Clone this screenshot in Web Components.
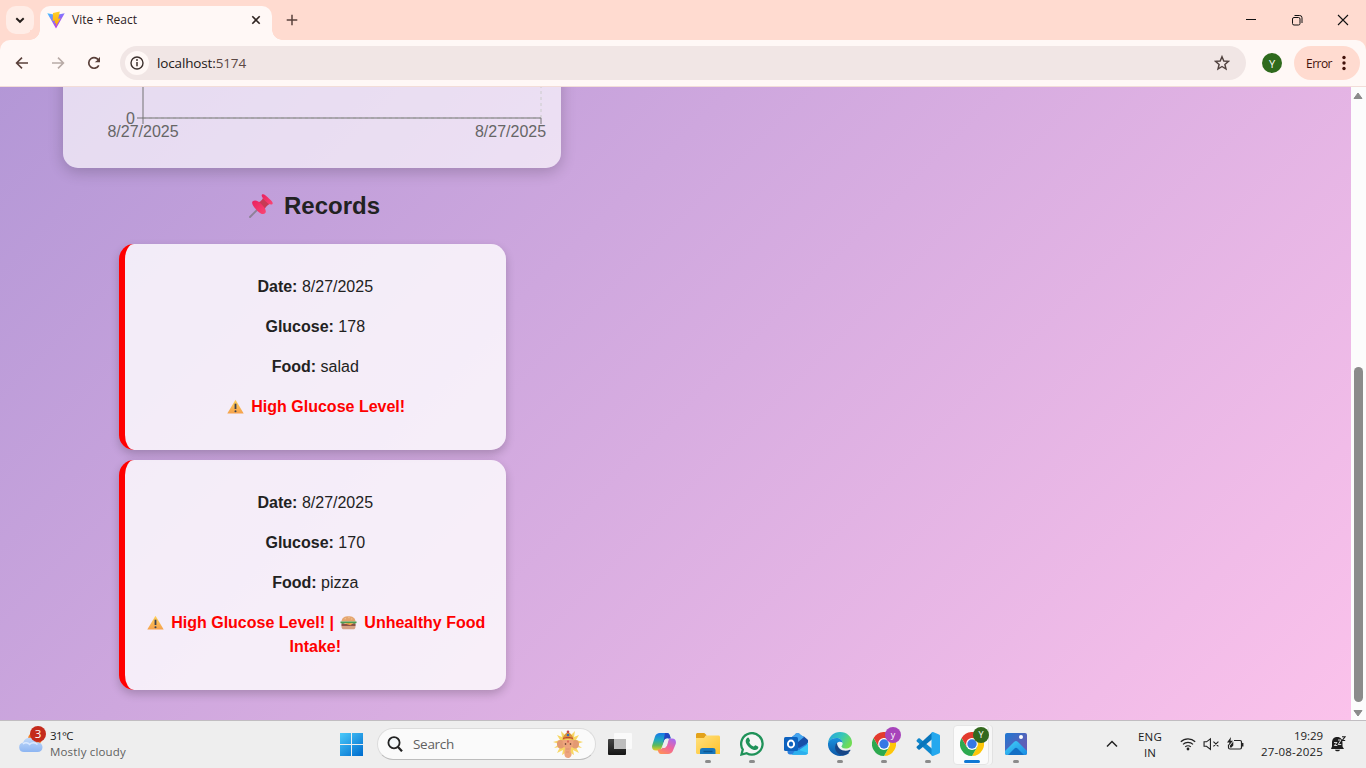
<!DOCTYPE html>
<html lang="en"><head><meta charset="utf-8"><title>Vite + React</title>
<style>
html,body{margin:0;height:100%;overflow:hidden}
body{font-family:"Open Sans","Noto Sans",sans-serif}
</style></head><body>
<desktop-screen></desktop-screen>
<script>
const make=(name,html,setup)=>customElements.define(name,class extends HTMLElement{
  connectedCallback(){
    if(this.shadowRoot)return;
    const t=document.createElement('template');
    t.innerHTML=typeof html==='function'?html(this):html;
    this.attachShadow({mode:'open'}).append(t.content.cloneNode(true));
    if(setup)setup(this);
  }
});

const chromeSvg=`<circle cx="12" cy="12" r="12" fill="#fff"/><path d="M12 6H22.4A12 12 0 0 1 12 24L17.2 15z" fill="#fdc60a"/><path d="M1.6 6A12 12 0 0 0 12 24L17.2 15H6.8z" fill="#2da94f"/><path d="M12 6H22.4A12 12 0 0 0 1.6 6L6.8 15 7 9z" fill="#e33b2e"/><circle cx="12" cy="12" r="5.9" fill="#fff"/><circle cx="12" cy="12" r="4.7" fill="#3578e5"/>`;
const ICONS={
 chevdown:['0 0 10 10','<path d="M1.3 3.2 5 6.8 8.7 3.2" fill="none" stroke="#251e1b" stroke-width="1.9"/>'],
 vite:['0 0 18 18','<defs><linearGradient id="v" x1="0" y1="0" x2=".7" y2="1"><stop stop-color="#41c5ff"/><stop offset=".5" stop-color="#8b6cfb"/><stop offset="1" stop-color="#c02ee8"/></linearGradient><linearGradient id="b" x1="0" y1="0" x2="0" y2="1"><stop stop-color="#ffd02a"/><stop offset="1" stop-color="#ffa800"/></linearGradient></defs><path d="M.3 2.300 9 17.500 17.700 2.300 9 4z" fill="url(#v)"/><path d="M12.800.600 6 2.100l-.3 8 2.400-.5-.6 3 1.700-.5-.4 3.400L13.700 7.200l-2.500.5.6-2.400z" fill="url(#b)"/>'],
 close:['0 0 10 10','<path d="M1.3 1.3l7.4 7.4M8.7 1.3 1.3 8.7" stroke="#302522" stroke-width="1.6"/>'],
 plus:['0 0 12 12','<path d="M6 .7v10.6M.7 6h10.6" stroke="#59413b" stroke-width="1.5"/>'],
 min:['0 0 12 12','<path d="M1 5.5h10" stroke="#111"/>'],
 restore:['0 0 12 12','<rect x="1.5" y="3.5" width="7.5" height="7.5" rx="1.5" fill="none" stroke="#111"/><path d="M3.5 1.5h5.2a2.3 2.3 0 0 1 2.3 2.3V9" fill="none" stroke="#111"/>'],
 wclose:['0 0 12 12','<path d="M1 1l10 10M11 1 1 11" stroke="#111" stroke-width="1.1"/>'],
 back:['0 0 14 14','<path d="M13 7H1.8M7 1.6 1.6 7 7 12.4" fill="none" stroke="#5a403a" stroke-width="1.6"/>'],
 fwd:['0 0 14 14','<path d="M1 7h11.2M7 1.6 12.4 7 7 12.4" fill="none" stroke="#b8aaa6" stroke-width="1.6"/>'],
 reload:['0 0 14 14','<path d="M11.8 9.3A5.3 5.3 0 1 1 12 5" fill="none" stroke="#5a403a" stroke-width="1.7"/><path d="M13 .8v5.5H7.7L10 4.6z" fill="#5a403a"/>'],
 info:['0 0 14 14','<circle cx="7" cy="7" r="6" fill="none" stroke="#3c302d" stroke-width="1.4"/><path d="M7 6v4.2" stroke="#3c302d" stroke-width="1.5"/><circle cx="7" cy="4" r=".95" fill="#3c302d"/>'],
 star:['0 0 16 16','<path d="M8 1.7 9.8 6l4.7.4-3.6 3 1.1 4.6-4-2.5L4 14l1.1-4.6-3.6-3L6.200 6z" fill="none" stroke="#50413e" stroke-width="1.45"/>'],
 dots:['0 0 4 16','<g fill="#42110a"><circle cx="2" cy="2.500" r="1.700"/><circle cx="2" cy="8" r="1.700"/><circle cx="2" cy="13.500" r="1.700"/></g>'],
 pin:['0 0 24 24','<defs><linearGradient id="p" x1="0" y1="0" x2="1" y2="1"><stop stop-color="#e9205f"/><stop offset="1" stop-color="#fb4674"/></linearGradient></defs><path d="M1 23 9 15" stroke="#8d8198" stroke-width="1.900" stroke-linecap="round"/><path d="m14 4 6.500 6c-2.500 1.500-4.500 3.500-5.500 6.500L7.500 9C10.500 8.500 13 6.500 14 4z" fill="#c83a55"/><path d="M13 .600c1.500-1.300 3.700.7 5.700 2.700 2 2 6 5 4.800 6.700-1.300 1.600-4.500-.4-6.300-2.200C15.200 5.800 11.600 2.200 13 .6z" fill="url(#p)"/><path d="M3.700 7.300c2.800-2 6 .2 8.300 2.500 2.500 2.600 6.200 6.200 4.300 9.200-1.700 2.300-5.300.5-7.600-1.800C6.200 14.600 1.400 9.700 3.700 7.300z" fill="url(#p)"/>'],
 warn:['0 0 18 16','<defs><linearGradient id="w" x1="0" y1="0" x2="0" y2="1"><stop stop-color="#ffd25a"/><stop offset="1" stop-color="#f5a14c"/></linearGradient></defs><path d="M9 .8 17.700 15.500H.3z" fill="url(#w)"/><path d="M9 5v5.700" stroke="#3a4050" stroke-width="1.900"/><circle cx="9" cy="13" r="1.100" fill="#3a4050"/>'],
 burger:['0 0 18 16','<path d="M1.500 7C2 2.500 5 1.200 9 1.200S16 2.500 16.500 7z" fill="#e5a56f"/><path d="M5 4h1M9 2.900h1M12 4.200h1" stroke="#f9ddb0"/><path d="M.5 6.800h17v1.700l-2.500 1-3-1-3 1-3-1-3 1-2.500-1z" fill="#4d9c4e"/><path d="M1.500 9.300h15v2.400H1.500z" fill="#8d4e45"/><path d="M4 8.700h10l-3 2.300z" fill="#f2a73f"/><path d="M1.500 11.600h15c0 2.700-1 3.700-3 3.700h-9c-2 0-3-1-3-3.700z" fill="#d6a083"/>'],
 weather:['0 0 26 24','<defs><linearGradient id="c" x1="0" y1="0" x2="0" y2="1"><stop stop-color="#c2d9f8"/><stop offset="1" stop-color="#8db5f2"/></linearGradient></defs><circle cx="17" cy="8" r="7" fill="#f47d20"/><path d="M6 22a5 5 0 0 1-.8-9.900C6 8.800 8.500 7 11.700 7c3.300 0 5.800 2 6.500 5 3.500-.8 6.300 1.800 6.300 5 0 3-2 5-5 5z" fill="url(#c)"/><path d="M5 13.500c2-2 5-1.500 6.500.5 2.500-2.500 6-2 8 0" fill="none" stroke="#d9e8ff" stroke-width="1.500"/>'],
 start:['0 0 24 24','<defs><linearGradient id="s" gradientUnits="userSpaceOnUse" x1="0" y1="0" x2="20" y2="24"><stop stop-color="#4cccfb"/><stop offset="1" stop-color="#0270d0"/></linearGradient></defs><path d="M0 1H11V12H0zM12 1H23V12H12zM0 13H11V24H0zM12 13H23V24H12z" fill="url(#s)"/>'],
 search:['0 0 16 16','<circle cx="7" cy="6.700" r="5.600" fill="#f2f6f8" stroke="#222" stroke-width="1.800"/><path d="m11 11 4 4.300" stroke="#222" stroke-width="2.200"/>'],
 ganesha:['0 0 30 28','<path d="m15 1 2 5 5-5-1 6 5-2-3 5 7 2-6 2 5 4-6-1 3 6-6-3 1 5-5-3-1 4-1-4-5 3 1-5-6 3 3-6-6 1 5-4-6-2 7-2-3-5 5 2-1-6 5 5z" fill="#f8d765"/><path d="M10 10.500C6 9 3.500 11 4 14.500 4.500 18.500 7.500 20 11 17zM20 10.500c4-1.500 6.500.5 6 4-.5 4-3.500 5.500-7 2.500z" fill="#e39a72"/><path d="M10 10h10c1 3 0 6-2 8-.7 3-.5 4 .5 5.500C19 26 17 28 15 28c-3 0-4-3-3.500-6l.5-4c-2-2-3-5-2-8z" fill="#eda47d"/><path d="M9.500 10c0-3.500 2-5.500 5.500-8.500 3.500 3 5.500 5 5.500 8.500-4-1.500-7-1.500-11 0z" fill="#d9953c"/><path d="M10 8.500c3-1.500 7-1.500 10 0" fill="none" stroke="#c14230"/><circle cx="15" cy="1.800" r="1.300" fill="#c84444"/><circle cx="15" cy="5" r="1.300" fill="#366bb3"/><path d="M15 10.500v2" stroke="#c33" stroke-width="1"/><circle cx="12.500" cy="14" r=".8" fill="#4a2a22"/><circle cx="17.500" cy="14" r=".8" fill="#4a2a22"/><path d="M13 19h3.500M13 22h3" stroke="#d58a69" stroke-width=".6"/>'],
 taskview:['0 0 24 24','<defs><linearGradient id="t" x1="0" y1="0" x2="0" y2="1"><stop stop-color="#454545"/><stop offset="1" stop-color="#151515"/></linearGradient></defs><rect y="7" width="18" height="16" rx="1" fill="url(#t)"/><rect x="6" y="1" width="18" height="16" rx="1" fill="#fff" fill-opacity=".72"/><path d="M6 7h12v10H6z" fill="#bdbdbd"/>'],
 copilot:['0 0 24 24','<defs><linearGradient id="a" x1="0" y1="0" x2="0" y2="1"><stop stop-color="#1677e8"/><stop offset=".4" stop-color="#20a9c0"/><stop offset=".7" stop-color="#5cb95c"/><stop offset="1" stop-color="#e8cd22"/></linearGradient><linearGradient id="d" x1=".8" y1="0" x2=".2" y2="1"><stop stop-color="#a66bf0"/><stop offset=".5" stop-color="#f0649c"/><stop offset="1" stop-color="#ff9157"/></linearGradient></defs><path d="M8 1h7c2 0 2.500 1.500 3 3l.7 2.500H15c-1.500 0-2.300 1-2.800 2.500L9.500 16c-.5 2-1.500 2.500-3 2.500H4C.5 18.500-.5 16 .3 13L3 4.500C3.700 2.300 5.500 1 8 1z" fill="url(#a)"/><path d="M13 1h2c2 0 2.500 1.500 3 3l.7 2.500H15c-1.500 0-2.300 1-2.800 2.500L11 12z" fill="#2346c2"/><path d="M16 22H9c-2 0-2.500-1.500-3-3l-.5-1.500H8c1.500 0 2.300-1 2.800-2.500L11 14h3c1 0 1-.5 1.300-1.500L17 6.500h3c3.500 0 4.500 2.500 3.700 5.500L21 18.500c-.7 2.200-2.500 3.500-5 3.500z" fill="url(#d)"/><path d="m11.900 9.500-1.700 6.500h2c1.300 0 2.200-1 2.500-2.500l1.800-6.800c-2.800-.5-4 .5-4.600 2.800z" fill="#eee"/>'],
 folder:['0 0 24 24','<defs><linearGradient id="f" x1="0" y1="0" x2="1" y2="1"><stop stop-color="#ffe17e"/><stop offset="1" stop-color="#ffc22c"/></linearGradient></defs><path d="M1.500 1h6.800L11 3.500h-1L8 7H0V2.500C0 1.700.7 1 1.500 1z" fill="#e3a21a"/><path d="M0 6h8l2-2.500h12.500c.9 0 1.500.6 1.500 1.500v17H1.500C.7 22 0 21.300 0 20.500z" fill="url(#f)"/><path d="M4 22v-3.500C4 16.800 5 16 6.500 16h10.500c1.700 0 2.500.8 2.500 2.500V22z" fill="#1877bd"/><path d="M7.500 19.500h9" stroke="#0b5593" stroke-width="1.500"/>'],
 whatsapp:['0 0 24 24','<path d="M1.500 22.500 2.800 17.500A10.700 10.700 0 1 1 6.700 21.200z" fill="#f5f5f5" stroke="#1f9259" stroke-width="2.300"/><path d="M6.800 6.200c.9-.9 1.900-.8 2.200.1l1 2.200c.3.700-.9 1.300-.7 1.900.8 1.900 2.300 3.200 4.200 4 .7.200 1.300-1.500 2-1.200l2.400 1.200c.8.400.5 2-.5 2.800-1.800 1.400-4.600.8-7.300-1.300-3.300-2.600-6-6.800-3.300-9.700z" fill="#1f9259"/>'],
 outlook:['0 0 24 24','<path d="m3.500 8.500 9-7.200c.8-.5 1.200-.5 2 0L23 8v12c0 1.500-1 2.500-2.500 2.500H6c-1.500 0-2.500-1-2.500-2.500z" fill="#2a7edc"/><path d="m7 5.500 13-1L24 8v3l-9 5-8-4z" fill="#164fa7"/><path d="M24 10v10c0 1.800-1 2.700-2.700 2.700H8L22.500 13z" fill="#36c7f5"/><path d="m12 17 12 4c-.5 1.200-1.200 1.700-2.700 1.700H8z" fill="#2caeed"/><path d="M13 1.200c.5-.3 1-.3 1.500 0L20 5l-6 5-7-4.200z" fill="#43a4ee"/><rect y="5" width="14" height="14" rx="1.500" fill="#0d62bf"/><ellipse cx="7" cy="12" rx="3.100" ry="3.500" fill="none" stroke="#fff" stroke-width="1.900"/>'],
 edge:['0 0 24 24','<defs><linearGradient id="e" x1="0" y1="0" x2="1" y2=".5"><stop stop-color="#249ee4"/><stop offset=".55" stop-color="#36c7b9"/><stop offset="1" stop-color="#70dc54"/></linearGradient><linearGradient id="g" x1="0" y1="0" x2="0" y2="1"><stop stop-color="#1a91de"/><stop offset="1" stop-color="#0d58a7"/></linearGradient></defs><path d="M0 11C.7 4.500 5.700 0 12 0c7 0 12 5 12 10.500 0 4-2.700 6-6.500 6-3 0-4.300-1-4.300-2s1.300-1.500 1.300-3.500c0-3-2.700-5-6-5C4.500 6 1.500 8 0 11z" fill="url(#e)"/><path d="M0 11C1.500 7.800 4.500 6 8.500 6c3.500 0 6 2 6 5-1-1-2.300-1.500-4-1-3.500 1.500-3.500 6-.7 9 2.500 2.600 6.500 3.300 10 1.500l1.500.500C19 23 15.500 24 12 24 5 24-.7 18 0 11z" fill="url(#g)"/><path d="M9 10.500c-4 4-1.700 12 6 13 3-.5 6-2.300 7.500-5.200.2-.5-.3-.8-.7-.5-6 3-13-1.300-12.800-7.300z" fill="#164687"/><path d="M13.500 10.300c1.300 1 1.200 2.700.1 3.500-.8.700-.3 2 2.500 2.500h-3c-3.500-1-3.500-5.700.4-6z" fill="#e9f7fc"/>'],
 chrome:['0 0 24 24',chromeSvg],
 vscode:['0 0 24 24','<path d="M17 17.500 3.800 6.600c-.5-.4-1-.4-1.500 0L.8 7.900c-.5.500-.5 1 0 1.500L16 23.500z" fill="#0f87cd"/><path d="M17 6.500 3.800 17.400c-.5.400-1 .4-1.500 0L.8 16.100c-.5-.5-.5-1 0-1.500L16 .5z" fill="#0875bb"/><path d="m17 0 6 2.500c.6.300 1 .8 1 1.500v16c0 .7-.4 1.200-1 1.500L17 24c-1 0-1.500-.5-1.500-1.500V1.500C15.500.5 16 0 17 0z" fill="#24a8ee"/>'],
 photos:['0 0 24 24','<defs><linearGradient id="h" x1="0" y1="0" x2="1" y2="1"><stop stop-color="#1d78d3"/><stop offset=".6" stop-color="#5961b8"/><stop offset="1" stop-color="#6b57b5"/></linearGradient><linearGradient id="m" x1="0" y1="0" x2="1" y2="1"><stop stop-color="#44d2f9"/><stop offset="1" stop-color="#188be2"/></linearGradient></defs><rect x="1" y="1" width="22" height="22" rx="2" fill="url(#h)"/><path d="M1 19 10 10c1.500-1.500 2.500-1.500 4 0L23 19v2c0 1.300-.7 2-2 2H3c-1.300 0-2-.7-2-2z" fill="url(#m)"/><path d="m4 23 6.500-6.500c1-1 2-1 3 0L20 23z" fill="#136fc5"/><circle cx="17" cy="5" r="2" fill="#fff"/>'],
 up:['0 0 12 12','<path d="m1 8.500 5-5 5 5" fill="none" stroke="#222" stroke-width="1.500"/>'],
 wifi:['0 0 16 14','<path d="M.8 4.800a10.300 10.300 0 0 1 14.400 0M3 7.400a7 7 0 0 1 10 0M5.200 9.900a4 4 0 0 1 5.600 0" fill="none" stroke="#222" stroke-width="1.200"/><circle cx="8" cy="12" r="1.400" fill="#222"/>'],
 mute:['0 0 16 14','<path d="M1 4.800h2.300L7 1.800v10.500L3.300 9.300H1zM9.800 4.700l4.700 4.700M14.500 4.700 9.800 9.400" fill="none" stroke="#222" stroke-width="1.050"/>'],
 battery:['0 0 17 14','<path d="M7 3.500h6A1.500 1.500 0 0 1 14.500 5v5.500A1.500 1.500 0 0 1 13 12H3a1.500 1.500 0 0 1-1.500-1.500V7.500" fill="none" stroke="#222" stroke-width="1.200"/><path d="M15.700 6v3.500" stroke="#222" stroke-width="1.500"/><path d="M4 0 0 5.500h2.500L1.500 9 6 3.800H3.500zM3 10.500V8.500l3.300-4v4L4.500 10.500z" fill="#222"/>'],
 bell:['0 0 16 16','<path d="M2 7c0-4 2-6 5-6 4 0 5.500 2.500 5.500 6v3.500L14 13H1l1-2.500z" fill="#1d1d1d"/><path d="M5 13.700h5c-.5 2.100-4.500 2.100-5 0z" fill="#1d1d1d"/><path d="M4 6.500h3L4.300 9.500h3M8 4h3L8.200 8.500h3" fill="none" stroke="#eee" stroke-width=".9"/><path d="M11.500 0h4v5h-3z" fill="#eee"/><path d="M12 .8h3L12.200 4.500h3" fill="none" stroke="#1d1d1d" stroke-width="1.100"/>']
};
make('ui-icon',el=>{
  const [box,body]=ICONS[el.getAttribute('name')];
  const w=el.getAttribute('w')||24,h=el.getAttribute('h')||w;
  return `<style>:host{display:inline-block;flex:none;width:${w}px;height:${h}px}svg{display:block;width:100%;height:100%}</style><svg viewBox="${box}" preserveAspectRatio="none">${body}</svg>`;
});

make('tab-strip',`<style>
:host{display:flex;height:40px;background:#ffdbd0;padding-left:6px;box-sizing:border-box;align-items:flex-start;flex:none}
.ts{width:28px;height:28px;border-radius:10px;background:#ffede7;display:grid;place-items:center;margin:6px 6px 0 0}
.tab{position:relative;width:232px;height:34px;margin-top:6px;background:#fff8f6;border-radius:10px 10px 0 0;display:flex;align-items:center;padding:0 11px 6px 7px;box-sizing:border-box;font-size:12px;line-height:16px;color:#2c211f}
.tab:before,.tab:after{content:"";position:absolute;bottom:0;width:10px;height:10px}
.tab:before{left:-10px;background:radial-gradient(circle at 0 0,#ffdbd0 9.500px,#fff8f6 10px)}
.tab:after{right:-10px;background:radial-gradient(circle at 100% 0,#ffdbd0 9.500px,#fff8f6 10px)}
fit-text{margin-left:7px}
.tab ui-icon:last-child{margin-left:auto}
.plus{margin:14px 0 0 14px}
.win{margin-left:auto;display:flex;gap:34px;padding:14px 17px 0 0}
</style><div class="ts"><ui-icon name="chevdown" w="10"></ui-icon></div>
<div class="tab"><ui-icon name="vite" w="18"></ui-icon><fit-text w="65">Vite + React</fit-text><ui-icon name="close" w="10"></ui-icon></div>
<ui-icon class="plus" name="plus" w="12"></ui-icon>
<div class="win"><ui-icon name="min" w="12"></ui-icon><ui-icon name="restore" w="12"></ui-icon><ui-icon name="wclose" w="12"></ui-icon></div>`);

make('address-bar',`<style>
:host{display:block;height:47px;background:#ffdbd0;flex:none}
.bar{height:47px;box-sizing:border-box;background:#fff8f6;border-radius:10px 10px 0 0;border-bottom:1px solid #f3ddd8;display:flex;align-items:center;padding:0 6px 0 15px}
.nav{display:flex;gap:22px;width:105px}
.omni{flex:1;height:34px;border-radius:17px;background:#f1e6e5;display:flex;align-items:center;padding:0 16px 0 5px;box-sizing:border-box;color:#231918;font-size:13.500px}
.i{width:24px;height:24px;border-radius:50%;background:#fff8f6;display:grid;place-items:center;margin-right:8px}
.omni>ui-icon{margin-left:auto}
.av{width:20px;height:20px;border-radius:50%;background:#2f6a1d;color:#fff;font-size:11px;display:grid;place-items:center;margin:0 12px 0 16px}
.err{width:66px;height:34px;border-radius:17px;background:#ffdbd0;display:flex;align-items:center;padding:0 14px 0 12px;box-sizing:border-box;font-size:12px;color:#42110a;justify-content:space-between}
</style><div class="bar"><div class="nav"><ui-icon name="back" w="14"></ui-icon><ui-icon name="fwd" w="14"></ui-icon><ui-icon name="reload" w="14"></ui-icon></div>
<div class="omni"><div class="i"><ui-icon name="info" w="14"></ui-icon></div><fit-text w="89">localhost:<span style="color:#5b4844">5174</span></fit-text><ui-icon name="star" w="16"></ui-icon></div>
<div class="av">Y</div><div class="err"><fit-text w="26">Error</fit-text><ui-icon name="dots" w="4" h="16"></ui-icon></div></div>`);

make('glucose-chart',`<style>
:host{display:block;width:498px;height:141px;margin-top:-60px;border-radius:15px;background:rgba(255,255,255,.65);box-shadow:0 4px 15px rgba(0,0,0,.2);flex:none}
svg{display:block;font:16px "Liberation Sans",Arial,sans-serif}
</style><svg width="498" height="141" viewBox="63 27 498 141">
<path d="M143 118H541M541 118V27" stroke="#ccc" stroke-dasharray="3 3" fill="none"/>
<path d="M143 27V124M137 118H541V124" stroke="#666" stroke-opacity=".9" fill="none"/>
<path d="M143 118H541" stroke="#aaa" stroke-dasharray="3 3" opacity=".4"/>
<g fill="#666"><text x="135" y="124" text-anchor="end">0</text><text x="143" y="137" text-anchor="middle">8/27/2025</text><text x="510.500" y="137" text-anchor="middle">8/27/2025</text></g></svg>`);

make('record-card',el=>`<style>
:host{display:block;box-sizing:border-box;width:387px;margin-bottom:10px;padding:15px;border-left:6px solid red;border-radius:15px;background:rgba(255,255,255,.8);box-shadow:0 4px 10px rgba(0,0,0,.2);text-align:center;font:16px/24px "Liberation Sans",Arial,sans-serif;color:#222;flex:none}
p{margin:16px 0;padding-left:.5px}.a{color:red;font-weight:bold}
</style><p><strong>Date:</strong> ${el.getAttribute('date')}</p><p><strong>Glucose:</strong> ${el.getAttribute('glucose')}</p><p><strong>Food:</strong> ${el.getAttribute('food')}</p><p class="a"><slot></slot></p>`);

make('page-view',`<style>
:host{display:flex;height:633px;flex:none;background:#fcfcfc}
.doc{width:1351px;overflow:hidden;background:linear-gradient(135deg,#a18cd1,#fbc2eb) 0 100%/1351px 1147px no-repeat}
.col{width:624px;display:flex;flex-direction:column;align-items:center}
h2{margin:20px 0;font:bold 24px/36px "Liberation Sans",Arial,sans-serif;color:#222;display:flex;align-items:center;gap:11px;padding-left:5px}
ui-icon{vertical-align:-2px;margin:0 2.500px 0 2px}
h2 ui-icon{margin:0}
.sb{width:15px;display:flex;flex-direction:column;align-items:center;box-sizing:border-box;padding:5px 0 3px}
.thumb{width:9px;height:335px;border-radius:4.500px;background:#8b8b8b;margin:267px 0 7px}
.sb svg{display:block;margin-right:1px}
</style><div class="doc"><div class="col"><glucose-chart></glucose-chart><h2><ui-icon name="pin" w="24"></ui-icon><span>Records</span></h2>
<record-card date="8/27/2025" glucose="178" food="salad"><ui-icon name="warn" w="17" h="15"></ui-icon> High Glucose Level!</record-card>
<record-card date="8/27/2025" glucose="170" food="pizza"><ui-icon name="warn" w="17" h="15"></ui-icon> High Glucose Level! | <ui-icon name="burger" w="17" h="15"></ui-icon> Unhealthy Food Intake!</record-card></div></div>
<div class="sb"><svg width="10" height="8"><path d="M5 1 9 6.500H1z" fill="#8b8b8b" stroke="#8b8b8b" stroke-linejoin="round"/></svg><div class="thumb"></div><svg width="10" height="8"><path d="M5 7 9 1.500H1z" fill="#8b8b8b" stroke="#8b8b8b" stroke-linejoin="round"/></svg></div>`);

make('task-app',el=>{
 const b=el.getAttribute('badge'),c=el.getAttribute('color'),on=el.hasAttribute('active'),run=el.hasAttribute('running');
 return `<style>:host{display:flex;flex-direction:column;align-items:center;position:relative;width:44px;height:47px;flex:none;padding-top:11px;box-sizing:border-box}
 .bg{position:absolute;left:3px;top:4px;width:34px;height:38px;border:1px solid #e5e5e5;border-radius:4px;background:#fbfbfb;box-shadow:3px 0 0 #f6f6f6,4px 0 0 #e2e2e2}
 ui-icon{position:relative}
 .ind{position:relative;margin-top:4px;height:3px;width:${on?16:6}px;border-radius:2px;background:${on?'#0f78d4':'#8b8b8b'}}
 .b{position:absolute;left:23px;top:6px;width:16px;height:16px;border-radius:50%;background:${c};color:#fff;font-size:9px;line-height:15px;text-align:center}</style>
 ${on?'<div class="bg"></div>':''}<ui-icon name="${el.getAttribute('icon')}" w="24"></ui-icon>${b?`<span class="b">${b}</span>`:''}${run||on?'<div class="ind"></div>':''}`;
});

make('task-bar',`<style>
:host{display:flex;height:48px;box-sizing:border-box;border-top:1px solid #c1bdc1;background:#eee;color:#1c1c1c;font-size:11.500px;flex:none}
.we{width:330px;box-sizing:border-box;padding:7px 0 0 18px;display:flex;position:relative;line-height:16px}
.we>ui-icon{margin-top:3px}
.n{position:absolute;left:30px;top:5px;width:16px;height:16px;border-radius:50%;background:#c42b1c;color:#fff;text-align:center;font-size:11.500px;line-height:16px}
.t{display:flex;flex-direction:column;padding-left:6px}
.g{color:#5f5f5f}
.se{width:219px;height:32px;box-sizing:border-box;border:1px solid #dcdcdc;border-bottom-color:#bdbdbd;border-radius:16px;background:#fafafa;margin:7px 2px 0 3px;display:flex;align-items:center;padding:0 12px 0 9px;font-size:13.500px;color:#606060}
.se fit-text{margin-left:10px}.se ui-icon:last-child{margin-left:auto}
.tray{margin-left:auto;display:flex;align-items:center;padding-right:20px;line-height:16px}
.tray>ui-icon{position:relative;top:-1px}
.c{display:flex;flex-direction:column;align-items:center}
.e{align-items:flex-end;position:relative;top:-1px}
</style><div class="we"><ui-icon name="weather" w="26" h="23"></ui-icon><span class="n">3</span><div class="t"><fit-text w="23">31°C</fit-text><fit-text class="g" w="76">Mostly cloudy</fit-text></div></div>
<task-app icon="start"></task-app><div class="se"><ui-icon name="search" w="16"></ui-icon><fit-text w="41">Search</fit-text><ui-icon name="ganesha" w="30" h="28"></ui-icon></div>
<task-app icon="taskview"></task-app><task-app icon="copilot"></task-app><task-app icon="folder" running></task-app><task-app icon="whatsapp" running></task-app><task-app icon="outlook"></task-app><task-app icon="edge" running></task-app><task-app icon="chrome" badge="y" color="#a744bb" running></task-app><task-app icon="vscode" running></task-app><task-app icon="chrome" badge="Y" color="#33691e" active></task-app><task-app icon="photos" running></task-app>
<div class="tray"><ui-icon name="up" w="12" style="margin-right:20px"></ui-icon><div class="c" style="margin-right:18px"><fit-text w="24">ENG</fit-text><fit-text w="12">IN</fit-text></div><ui-icon name="wifi" w="16" h="14" style="margin-right:7px"></ui-icon><ui-icon name="mute" w="17" h="14" style="margin-right:7px"></ui-icon><ui-icon name="battery" w="17" h="14" style="margin-right:17px"></ui-icon><div class="c e" style="margin-right:7px"><fit-text w="29">19:29</fit-text><fit-text w="62">27-08-2025</fit-text></div><ui-icon name="bell" w="16"></ui-icon></div>`);

make('desktop-screen',`<style>:host{display:flex;flex-direction:column;width:1366px;height:768px;overflow:hidden}</style><tab-strip></tab-strip><address-bar></address-bar><page-view></page-view><task-bar></task-bar>`);

// Spaces its letters so that the text takes exactly the width asked for.
make('fit-text','<style>:host{display:block;white-space:nowrap}span{display:inline-block}</style><span><slot></slot></span>',el=>{
  const s=el.shadowRoot.querySelector('span'),w=+el.getAttribute('w'),n=s.getBoundingClientRect().width;
  if(n)s.style.letterSpacing=((w-n)/el.textContent.length)+'px';
});
</script></body></html>
